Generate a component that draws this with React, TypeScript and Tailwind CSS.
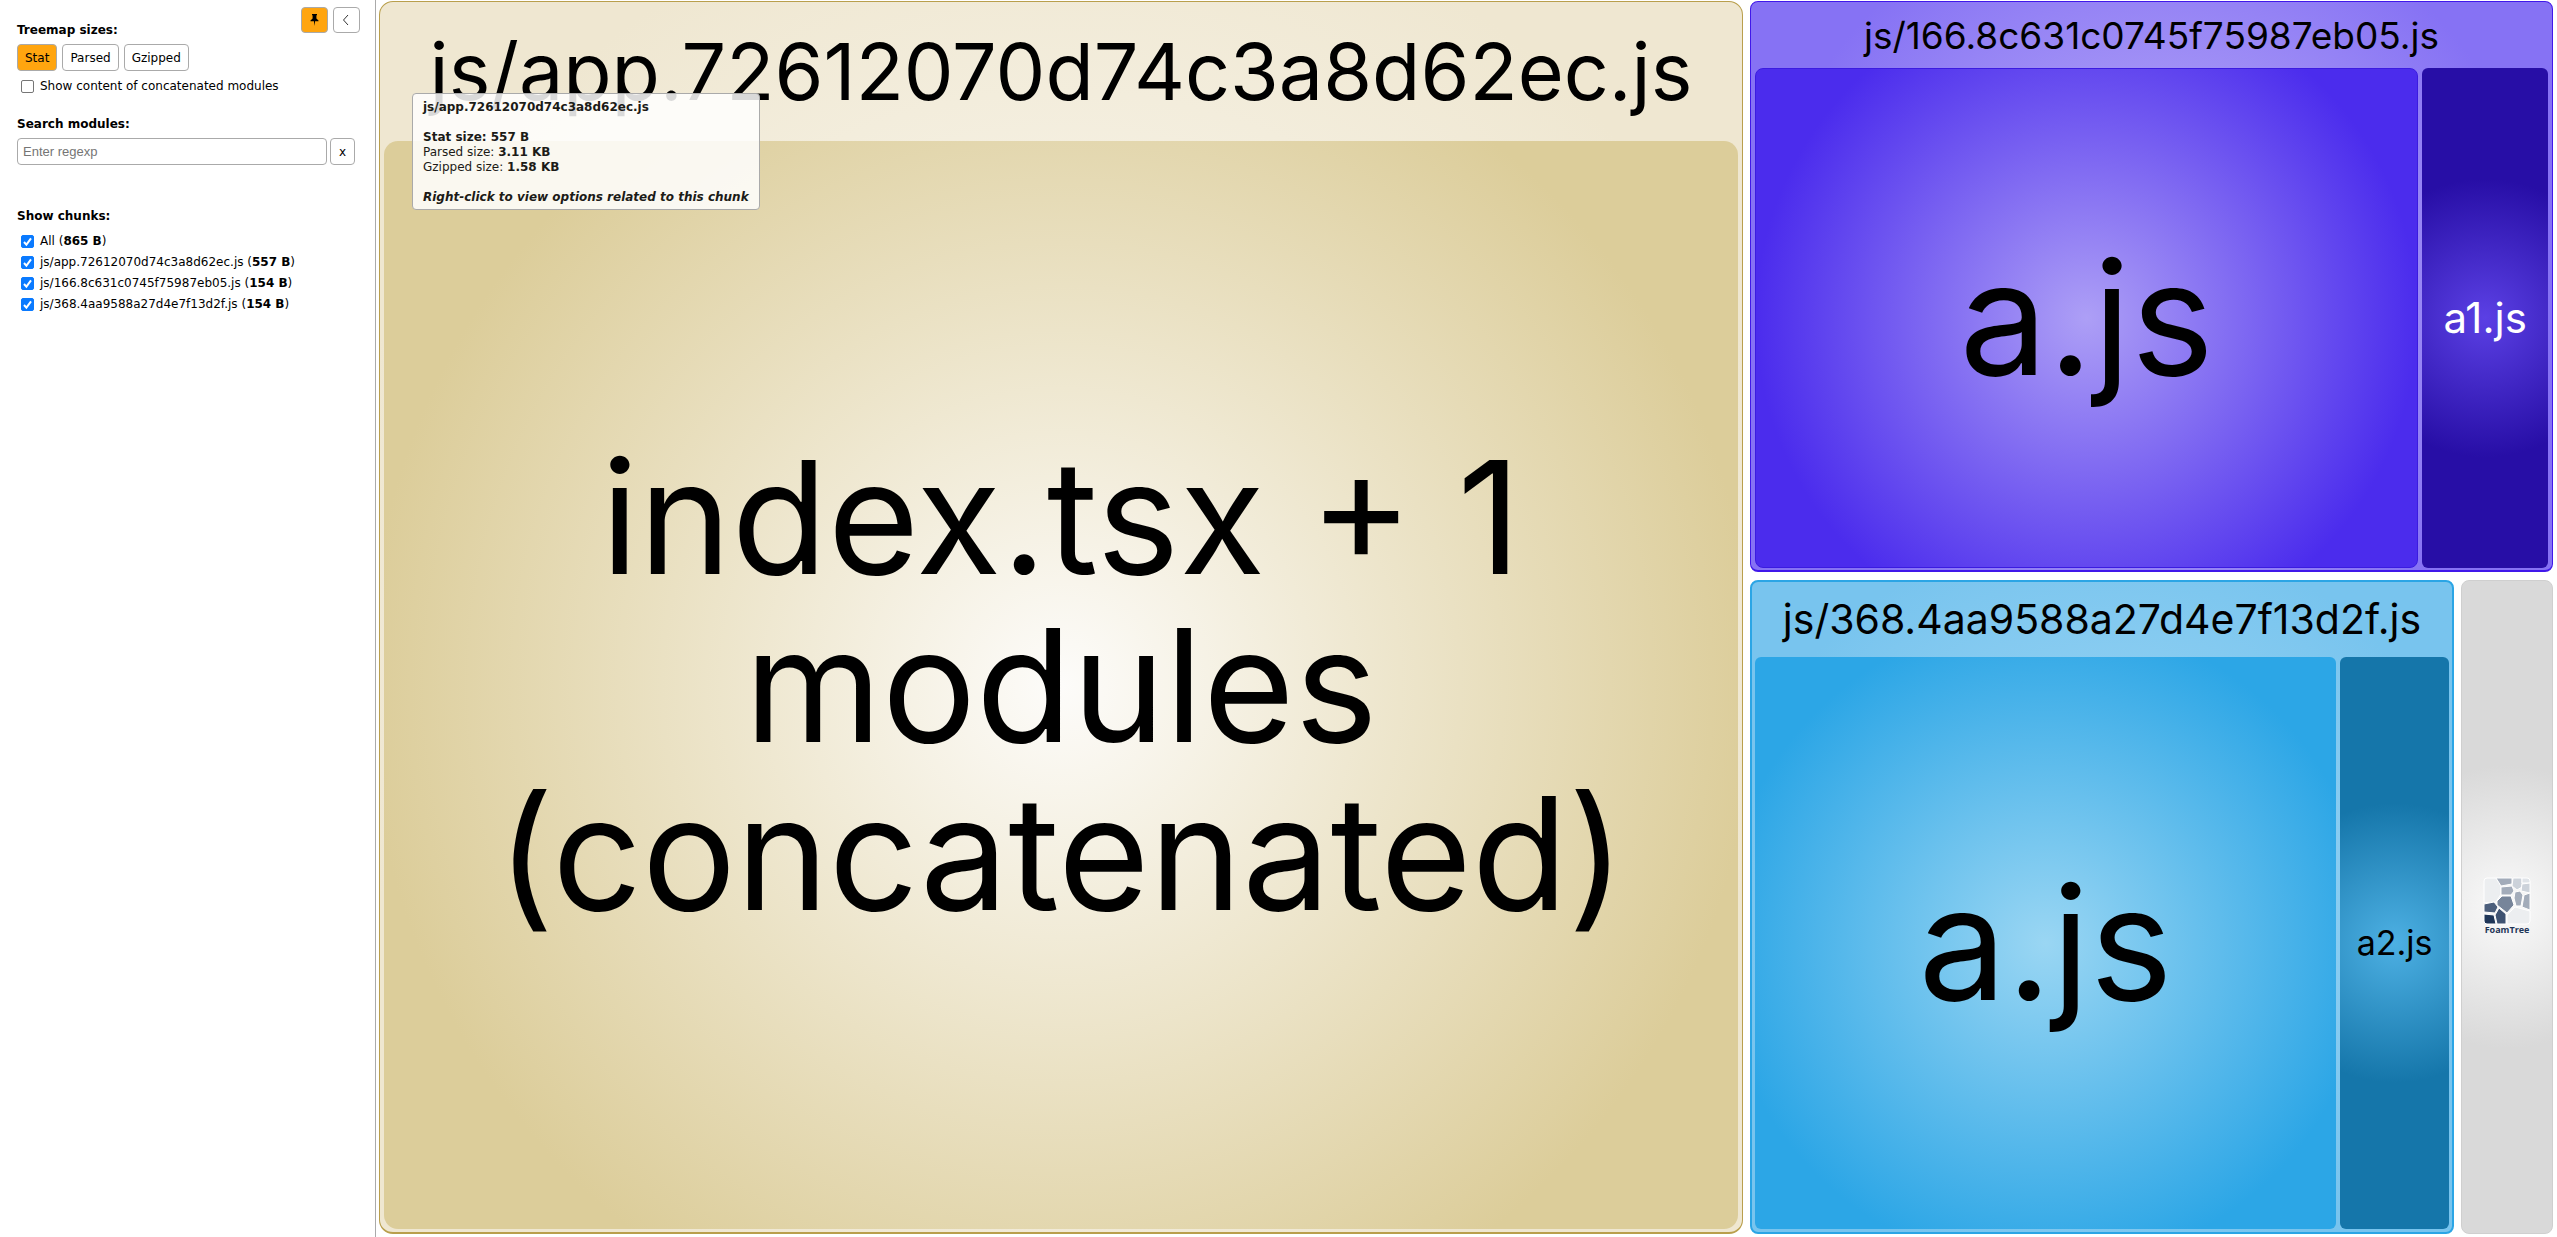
const chunks = [
  { name: 'All', size: '865 B' },
  { name: 'js/app.72612070d74c3a8d62ec.js', size: '557 B' },
  { name: 'js/166.8c631c0745f75987eb05.js', size: '154 B' },
  { name: 'js/368.4aa9588a27d4e7f13d2f.js', size: '154 B' },
];

const button = 'rounded border border-[#aaa] text-[12px] leading-[14px] cursor-pointer';

function Check({ checked }: { checked?: boolean }) {
  return (
    <span className="grid size-[13px] shrink-0">
      <input
        type="checkbox"
        defaultChecked={checked}
        className="peer col-start-1 row-start-1 size-[13px] appearance-none rounded-[2px] border border-[#767676] bg-white checked:border-[#0a7aff] checked:bg-[#0a7aff]"
      />
      <svg viewBox="0 0 13 13" className="pointer-events-none col-start-1 row-start-1 size-[13px] opacity-0 peer-checked:opacity-100">
        <path d="M3 7l2.4 2.6L10 3.4" fill="none" stroke="#fff" strokeWidth="2" />
      </svg>
    </span>
  );
}

function Sidebar() {
  return (
    <aside className="w-[376px] shrink-0 border-r border-[#aaa] bg-white pr-[15px] pl-[17px] text-[12px] leading-[15px] text-black">
      <div className="flex justify-between">
        <b className="mt-[23px]">Treemap sizes:</b>
        <div className="mt-[7px] flex gap-[5px]">
          <button aria-label="Pin" className={`${button} grid h-[26px] w-[27px] place-items-center bg-[#ffa50f]`}>
            <svg viewBox="0 0 9 14" className="h-[14px] w-[9px]">
              <path d="M2 1h5v1.2H6.4V5.4L8.5 7.4V8.3H5.1L4.5 13L3.9 8.3H.5V7.4L2.6 5.4V2.2H2z" fill="#000" />
            </svg>
          </button>
          <button aria-label="Hide sidebar" className={`${button} grid h-[26px] w-[27px] place-items-center bg-white`}>
            <svg viewBox="0 0 8 12" className="mr-[2px] h-[12px] w-[8px]">
              <path d="M6 1L1.5 6L6 11" fill="none" stroke="#333" strokeWidth="1" />
            </svg>
          </button>
        </div>
      </div>
      <div className="mt-[6px] flex gap-[5px]">
        <button className={`${button} h-[27px] bg-[#ffa50f] px-[7px]`}>Stat</button>
        <button className={`${button} h-[27px] bg-white px-[7px]`}>Parsed</button>
        <button className={`${button} h-[27px] bg-white px-[7px]`}>Gzipped</button>
      </div>
      <label className="mt-[8px] ml-[4px] flex items-center gap-[6px]">
        <Check />
        Show content of concatenated modules
      </label>
      <label htmlFor="search" className="mt-[23px] block font-bold">
        Search modules:
      </label>
      <div className="mt-[6px] mr-[5px] flex gap-[3px]">
        <input
          id="search"
          placeholder="Enter regexp"
          className="h-[27px] min-w-0 flex-1 rounded border border-[#aaa] px-[5px] font-['Liberation_Sans',sans-serif] text-[13px] placeholder:text-[#757575]"
        />
        <button aria-label="Clear search" className={`${button} h-[27px] w-[25px] bg-white`}>
          x
        </button>
      </div>
      <h2 className="mt-[44px] font-bold">Show chunks:</h2>
      <div className="mt-[10px] ml-[4px] flex flex-col gap-[6px]">
        {chunks.map((c) => (
          <label key={c.name} className="flex items-center gap-[6px]">
            <Check checked />
            <span>
              {c.name} (<b>{c.size}</b>)
            </span>
          </label>
        ))}
      </div>
    </aside>
  );
}

function Tooltip() {
  return (
    <div className="absolute top-[93px] left-[412px] rounded border border-[#aaa] bg-white/85 px-[10px] pt-[6px] pb-[4px] text-[12px] leading-[15px] whitespace-nowrap text-[#1c1b17]">
      <div className="font-bold">js/app.72612070d74c3a8d62ec.js</div>
      <div className="mt-[15px] font-bold">Stat size: 557 B</div>
      <div>
        Parsed size: <b>3.11 KB</b>
      </div>
      <div>
        Gzipped size: <b>1.58 KB</b>
      </div>
      <div className="mt-[15px] font-bold italic">Right-click to view options related to this chunk</div>
    </div>
  );
}

function FoamTree() {
  return (
    <svg viewBox="0 0 46 58" className="h-[58px] w-[46px] overflow-visible" role="img" aria-label="FoamTree">
      <g stroke="#fff" strokeWidth="1">
        <path d="M0 3Q0 0 3 0H12L17 8V16L12 24L0 25Z" fill="#eceef0" />
        <path d="M12 0H28V6L17 8Z" fill="#a3acba" />
        <path d="M29 0H38V9L33 12L28 8Z" fill="#ccd2da" />
        <path d="M38 0H43Q46 0 46 3V5L38 5Z" fill="#dfe3e8" />
        <path d="M38 6L46 5V15L37 13Z" fill="#ccd2da" />
        <path d="M17 9L28 8L30 13L27 17L17 17Z" fill="#a3acba" />
        <path d="M13 23L18 18H27L30 27L23 35L13 27Z" fill="#77859a" />
        <path d="M31 14L36 13L39 17L37 28L32 28L30 20Z" fill="#a3acba" />
        <path d="M40 17L46 15V32L38 29Z" fill="#a3acba" />
        <path d="M0 26L10 24L14 29L11 35L0 34Z" fill="#4c5f7c" />
        <path d="M0 36L10 37L12 46H3Q0 46 0 43Z" fill="#1f3658" />
        <path d="M15 30L22 36V46H13L11 37Z" fill="#3f5372" />
        <path d="M23 37L31 29L46 33V43Q46 46 43 46H23Z" fill="#eceef0" />
      </g>
      <text x="23" y="55" textAnchor="middle" fontSize="9" fontWeight="bold" fill="#1f3658" fontFamily="Open Sans, sans-serif">
        FoamTree
      </text>
    </svg>
  );
}

export default function App() {
  return (
    <div className="relative flex h-screen min-h-[600px] overflow-hidden bg-white font-['Verdana','DejaVu_Sans',sans-serif]">
      <Sidebar />
      <main className="grid min-w-0 flex-1 grid-cols-[1364fr_803fr] gap-[7px] pt-px pr-[4px] pb-[3px] pl-[3px] font-['Inter',sans-serif] text-black">
        <section className="flex min-w-0 flex-col rounded-[14px] border border-b-2 border-[#b99f4c] bg-[radial-gradient(circle,#fdfcf8_0%,#efe7d1_80%)] px-[4px] pb-[3px]">
          <h1 className="grid h-[139px] shrink-0 place-items-center text-[79px] leading-none whitespace-nowrap">
            js/app.72612070d74c3a8d62ec.js
          </h1>
          <div className="grid flex-1 place-items-center rounded-[14px] bg-[radial-gradient(circle,#fdfcfa_0%,#dccd9a_80%)] text-center text-[157px] leading-[168px]">
            <p>
              index.tsx + 1<br />
              modules
              <br />
              (concatenated)
            </p>
          </div>
        </section>
        <div className="grid min-w-0 grid-rows-[571fr_654fr] gap-[8px]">
          <section className="flex min-w-0 flex-col rounded-[8px] border border-b-2 border-[#4018ea] bg-[radial-gradient(circle,#c0b4f8_0%,#8672f4_80%)] px-[4px] pb-[2px]">
            <h2 className="grid h-[66px] shrink-0 place-items-center text-[37px] leading-none">js/166.8c631c0745f75987eb05.js</h2>
            <div className="grid flex-1 grid-cols-[665fr_126fr] gap-[4px]">
              <div className="grid place-items-center rounded-[8px] border border-[#3b1be0] bg-[radial-gradient(circle,#ad9ff6_0%,#4b2ced_80%)] text-[157px] leading-none">
                a.js
              </div>
              <div className="grid place-items-center rounded-[6px] bg-[radial-gradient(circle,#5b40e4_0%,#270ea6_54%)] text-[42px] leading-none text-white">
                a1.js
              </div>
            </div>
          </section>
          <div className="grid grid-cols-[704fr_92fr] gap-[7px]">
            <section className="flex min-w-0 flex-col rounded-[8px] border-2 border-[#2ba5e5] bg-[radial-gradient(circle,#a5daf6_0%,#78c4ee_80%)] px-[3px] pb-[3px]">
              <h2 className="grid h-[75px] shrink-0 place-items-center text-[41px] leading-none">js/368.4aa9588a27d4e7f13d2f.js</h2>
              <div className="grid flex-1 grid-cols-[582fr_109fr] gap-[4px]">
                <div className="grid place-items-center rounded-[6px] bg-[radial-gradient(circle,#9ad6f3_0%,#2ca6e6_80%)] text-[157px] leading-none">
                  a.js
                </div>
                <div className="grid place-items-center rounded-[6px] bg-[radial-gradient(circle,#4db0e3_0%,#1576aa_48%)] text-[34px] leading-none">
                  a2.js
                </div>
              </div>
            </section>
            <section className="grid place-items-center rounded-[8px] border border-[#cfcfcf] bg-[radial-gradient(circle,#fafafa_0%,#d9d9d9_43%)]">
              <FoamTree />
            </section>
          </div>
        </div>
      </main>
      <Tooltip />
    </div>
  );
}
